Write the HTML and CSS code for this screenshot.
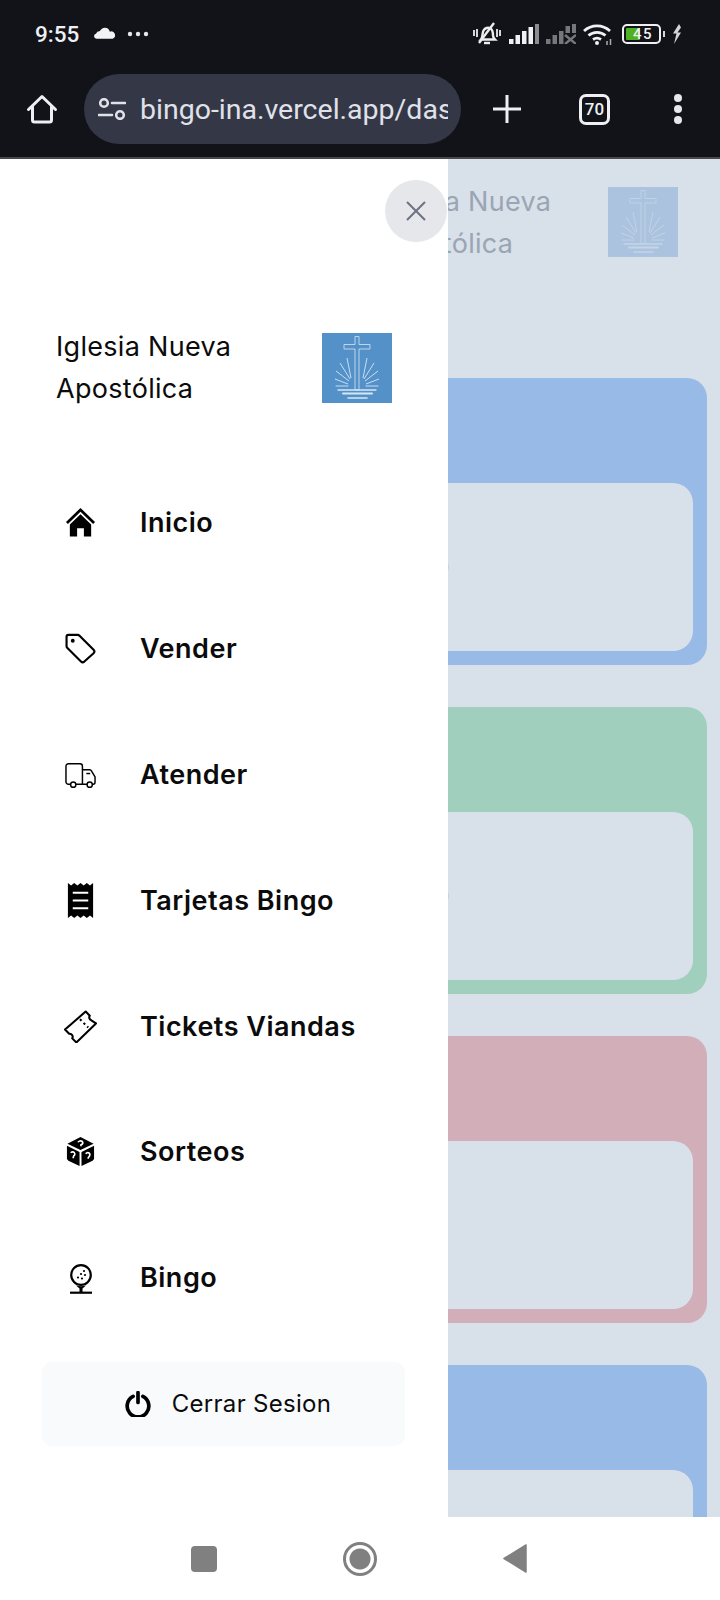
FILE: index.html
```html
<!DOCTYPE html>
<html lang="es">
<head>
<meta charset="utf-8">
<title>Bingo INA</title>
<link rel="stylesheet" href="styles.css">
</head>
<body>
<svg class="defs" width="0" height="0" aria-hidden="true">
  <symbol id="logo" viewBox="0 0 70 70">
    <g fill="none" stroke="currentColor">
      <path d="M33 3.500h4v8h11v4.500H37v41h-4V16H22v-4.500h11z" stroke-width=".8"/>
      <path d="M29 45L25 25M28 46L18 30M27 48L14 38M26 51L13 46M41 45L45 25M42 46L52 30M43 48L56 38M44 51L57 46" stroke-width=".9"/>
    </g>
    <g fill="none" stroke="currentColor" stroke-linecap="round">
      <path d="M14 53H26M44 53H56" stroke-width=".9"/>
      <path d="M16 57H54" stroke-width="1.300"/>
      <path d="M21 60.500H50" stroke-width="2"/>
      <path d="M26 65H45" stroke-width="1.600"/>
    </g>
  </symbol>
</svg>

<header class="chrome">
  <div class="status">
    <div class="status-left">
      <span class="time">9:55</span>
      <svg class="ic-cloud" viewBox="0 0 22 12"><path d="M2.500 12A2.600 2.600 0 0 1 2 6.900 4.500 4.500 0 0 1 6.200 4 6 6 0 0 1 11.500 0.500 5.600 5.600 0 0 1 16.600 4.600 3.800 3.800 0 0 1 19.500 12z" fill="#f1f2f4"/></svg>
      <svg class="ic-more" viewBox="0 0 22 6"><g fill="#e6e7ea"><circle cx="3" cy="3" r="2.200"/><circle cx="11" cy="3" r="2.200"/><circle cx="19" cy="3" r="2.200"/></g></svg>
    </div>
    <div class="status-right">
      <svg class="ic-bell" viewBox="0 0 28 24"><g fill="none" stroke="#eceded" stroke-width="2.400"><path d="M8 17.500c2-2 1-6 2.500-9C12 6 15 5 17.500 6.500 20 8 20 11 20 13.500c0 2 1 3 2 4z"/><path d="M11 21h6"/><path d="M6 21L21 1"/><path d="M1 8v6M4 7v8M27 8v6M24 7v8" stroke-width="1.800"/></g></svg>
      <svg class="ic-signal" viewBox="0 0 30 20"><g fill="#f0f1f2"><rect x="0" y="15" width="4.500" height="5"/><rect x="6.500" y="11" width="4.500" height="9"/><rect x="13" y="7" width="4.500" height="13"/><rect x="19.500" y="3" width="4.500" height="17"/></g><rect x="26" y="0" width="4" height="20" fill="#8b8d90"/></svg>
      <svg class="ic-signal" viewBox="0 0 30 20"><g fill="#75777b"><rect x="0" y="15" width="4.500" height="5"/><rect x="6.500" y="11" width="4.500" height="9"/><rect x="13" y="7" width="4.500" height="13"/><rect x="19.500" y="2" width="4.500" height="7"/><rect x="26" y="0" width="4" height="9"/><path d="M19 11l11 9M30 11l-11 9" stroke="#75777b" stroke-width="2.500"/></g></svg>
      <svg class="ic-wifi" viewBox="0 0 30 22"><g fill="none" stroke="#f0f1f2" stroke-width="2.800"><path d="M1 8a19 19 0 0 1 26 0"/><path d="M5.500 12.500a13 13 0 0 1 17 0"/><path d="M10 16.500a7 7 0 0 1 8 0"/></g><circle cx="14" cy="20" r="2" fill="#f0f1f2"/><path d="M24 22v-4M27.500 22v-6" stroke="#a9abae" stroke-width="1.500"/></svg>
      <div class="battery">
        <div class="battery-body"><span class="battery-fill"></span><span class="battery-num">45</span></div>
        <span class="battery-tip"></span>
      </div>
      <svg class="ic-bolt" viewBox="0 0 10 20"><path d="M7 0L1 9.500h3.500L2 20l7-11.500H5.500L9 3.500z" fill="#d4d5d7"/></svg>
    </div>
  </div>
  <div class="toolbar">
    <svg class="ic-home" viewBox="0 0 32 32"><path d="M2.500 16.500L16 3.500l13.500 13M6.500 13.500V27a2 2 0 0 0 2 2h15a2 2 0 0 0 2-2V13.500" fill="none" stroke="#eeeff2" stroke-width="3" stroke-linecap="round" stroke-linejoin="round"/></svg>
    <div class="urlbar">
      <svg class="ic-tune" viewBox="0 0 28 22"><g fill="none" stroke="#e0e2ea" stroke-width="2.600"><circle cx="6" cy="5" r="3.800"/><circle cx="22" cy="17" r="3.800"/><path d="M14 5h13M1 17h13" stroke-linecap="round"/></g></svg>
      <span class="url">bingo-ina.vercel.app/das</span>
    </div>
    <svg class="ic-plus" viewBox="0 0 28 28"><path d="M14 0v28M0 14h28" stroke="#eeeff2" stroke-width="3" stroke-linecap="round"/></svg>
    <div class="tabs">70</div>
    <svg class="ic-dots" viewBox="0 0 8 30"><g fill="#e6e7ea"><circle cx="4" cy="4" r="4"/><circle cx="4" cy="15" r="4"/><circle cx="4" cy="26" r="4"/></g></svg>
  </div>
</header>

<main class="viewport">
  <div class="dashboard">
    <div class="dash-head">
      <p class="dash-title">Iglesia Nueva Apostólica</p>
      <svg class="dash-logo"><use href="#logo"/></svg>
    </div>
    <section class="card card-blue"><div class="card-inner"><span class="card-value">0</span></div></section>
    <section class="card card-green"><div class="card-inner"><span class="card-value">0</span></div></section>
    <section class="card card-red"><div class="card-inner"></div></section>
    <section class="card card-blue"><div class="card-inner"></div></section>
  </div>

  <aside class="drawer">
    <button class="close" type="button" aria-label="Cerrar">
      <svg viewBox="0 0 20 20"><path d="M1 1l18 18M19 1L1 19" stroke="#6b7280" stroke-width="2"/></svg>
    </button>
    <div class="drawer-head">
      <p class="drawer-title">Iglesia Nueva Apostólica</p>
      <svg class="drawer-logo"><use href="#logo"/></svg>
    </div>
    <nav class="menu">
      <a class="item"><svg class="mi" viewBox="0 0 32 32"><path d="M16 1L1 15.500l2 2L16 5l13 12.500 2-2z" fill="#000"/><path d="M5 18L16 7.500 27 18v12.500h-7.500V22h-7v8.500H5z" fill="#000"/></svg><span>Inicio</span></a>
      <a class="item"><svg class="mi" viewBox="0 0 32 32"><path d="M3.500 2H13a3 3 0 0 1 2 .9l14.500 14.500a2.500 2.500 0 0 1 0 3.500L20 29.500a2.500 2.500 0 0 1-3.500 0L2.500 15.500a3 3 0 0 1-.9-2V4A2 2 0 0 1 3.500 2z" fill="none" stroke="#000" stroke-width="2.200" stroke-linejoin="round"/><circle cx="8" cy="8" r="2" fill="#000"/></svg><span>Vender</span></a>
      <a class="item"><svg class="mi" viewBox="0 0 32 32"><g fill="none" stroke="#000" stroke-width="1.500" stroke-linejoin="round"><path d="M6 26H3.500A2.500 2.500 0 0 1 1 23.500V7.500A2.500 2.500 0 0 1 3.500 5h12A2.500 2.500 0 0 1 18 7.500V26H11"/><path d="M18 11h7.500a2 2 0 0 1 1.800 1.200L31 18.500V24a2 2 0 0 1-2 2h-1M23 26h-5"/><circle cx="8.500" cy="26.500" r="2.700"/><circle cx="25.500" cy="26.500" r="2.700"/><path d="M22 15h4"/></g></svg><span>Atender</span></a>
      <a class="item"><svg class="mi mi-tall" viewBox="0 0 32 36"><path d="M3 0l3.300 2.500L9.500 0l3.300 2.500L16 0l3.300 2.500L22.500 0l3.300 2.500L29 0v36l-3.200-2.500L22.500 36l-3.200-2.500L16 36l-3.200-2.500L9.500 36l-3.200-2.500L3 36z" fill="#000"/><path d="M8 10h16M8 18h16M8 26h16" stroke="#fff" stroke-width="2"/></svg><span>Tarjetas Bingo</span></a>
      <a class="item"><svg class="mi mi-wide" viewBox="0 0 32 32"><g fill="none" stroke="#000" stroke-width="2" stroke-linejoin="round"><path d="M21 1.500L25 5.500a3 3 0 0 0 1.500 4.500L31 13 12 31.500 8 27.500A3 3 0 0 0 5 23L1 19z"/><path d="M15.500 9l1.500 1.500M19 12.500l1.500 1.500M22.500 16l1 1"/></g></svg><span>Tickets Viandas</span></a>
      <a class="item"><svg class="mi" viewBox="0 0 32 32"><path d="M16 1L29.500 8 16 14.500 2.500 8z" fill="#000"/><path d="M2 10l13 6.500V31L3.500 25.500Q2 24.500 2 23z" fill="#000"/><path d="M30 10l-13 6.500V31l11.500-5.500Q30 24.500 30 23z" fill="#000"/><g fill="none" stroke="#fff" stroke-width="1.700"><path d="M13.500 6.500a2.500 2 0 1 1 3 2.500v1.500"/><path d="M6 17.500a2.200 2.200 0 1 1 3 3l-.5 1.500v1"/><path d="M21.500 18.500a2.200 2.200 0 1 1 3.500 2.500l-1 1.500v1"/></g></svg><span>Sorteos</span></a>
      <a class="item"><svg class="mi mi-golf" viewBox="0 0 24 30"><circle cx="12" cy="11" r="9.800" fill="none" stroke="#000" stroke-width="2.200"/><path d="M7 21.500Q12 23 17 21.500L13.500 24.500v3.500h-3v-3.500z" fill="#000"/><path d="M1 28.700h22" stroke="#000" stroke-width="2.200"/><g fill="#000"><circle cx="15" cy="7" r="1.100"/><circle cx="12" cy="10" r="1.100"/><circle cx="16" cy="11" r="1.100"/><circle cx="9" cy="13.500" r="1.100"/><circle cx="13" cy="14.500" r="1.100"/></g></svg><span>Bingo</span></a>
    </nav>
    <button class="logout" type="button">
      <svg viewBox="0 0 24 24"><path d="M7.500 5a10 10 0 1 0 9 0" fill="none" stroke="#000" stroke-width="3.400" stroke-linecap="round"/><path d="M12 1.500v9" stroke="#000" stroke-width="3.400" stroke-linecap="round"/></svg>
      <span>Cerrar Sesion</span>
    </button>
  </aside>
</main>

<footer class="navbar">
  <span class="nav-square"></span>
  <span class="nav-circle"></span>
  <svg class="nav-back" viewBox="0 0 24 29"><path d="M23 1v27L1 14.500z" fill="#808080" stroke="#808080" stroke-width="1.500" stroke-linejoin="round"/></svg>
</footer>
</body>
</html>
```
FILE: styles.css
```css
* { box-sizing: border-box; }
html, body { margin: 0; height: 1600px; }
body {
  display: flex;
  flex-direction: column;
  width: 720px;
  overflow: hidden;
  background: #fff;
  font-family: Inter, "Liberation Sans", sans-serif;
}
p { margin: 0; }
svg { display: block; flex: none; }
.defs { position: absolute; }

/* Browser chrome */
.chrome {
  height: 159px;
  flex: none;
  background: #111318;
  border-bottom: 2px solid #47484c;
  font-family: Roboto, "Liberation Sans", sans-serif;
}
.status {
  height: 68px;
  padding: 0 38px 0 35px;
  display: flex;
  justify-content: space-between;
  align-items: center;
}
.status-left, .status-right { display: flex; align-items: center; }
.time { font-size: 22.5px; font-weight: 500; color: #eef0f2; width: 58px; }
.ic-cloud { width: 21px; height: 12px; margin-left: 1px; margin-top: -3px; }
.ic-more { width: 22px; height: 6px; margin-left: 12px; margin-top: -1px; }
.ic-bell { width: 28px; height: 24px; }
.ic-signal { width: 30px; height: 20px; margin-left: 8px; margin-right: -1px; }
.ic-wifi { width: 30px; height: 22px; margin-left: 8px; }
.battery { display: flex; align-items: center; margin-left: 9px; gap: 2px; }
.battery-body {
  position: relative;
  width: 39px;
  height: 20px;
  border: 2px solid #eef0f2;
  border-radius: 5px;
  padding: 2px;
  display: flex;
}
.battery-fill { width: 45%; background: #4fb021; border-radius: 1px; }
.battery-num {
  position: absolute;
  left: 9px;
  top: -1px;
  font-size: 15px;
  line-height: 18px;
  font-weight: 500;
  color: #f1f2f4;
  letter-spacing: 1.5px;
}
.battery-tip { width: 2px; height: 6px; background: #d4d5d7; }
.ic-bolt { width: 10px; height: 20px; margin-left: 7px; }

.toolbar {
  height: 89px;
  padding: 0 0 7px 26px;
  display: flex;
  align-items: center;
}
.ic-home { width: 32px; height: 32px; }
.urlbar {
  width: 377px;
  height: 70px;
  margin-left: 26px;
  padding: 0 13px 0 14px;
  display: flex;
  align-items: center;
  gap: 14px;
  background: #343746;
  border-radius: 35px;
  overflow: hidden;
}
.ic-tune { width: 28px; height: 22px; }
.url { font-size: 28.5px; color: #e0e2ea; white-space: nowrap; overflow: hidden; }
.ic-plus { width: 28px; height: 28px; margin-left: 32px; }
.tabs {
  width: 31px;
  height: 31px;
  margin-left: 58px;
  border: 3px solid #eeeff2;
  border-radius: 7px;
  color: #eeeff2;
  font-size: 17px;
  font-weight: 500;
  line-height: 25px;
  text-align: center;
}
.ic-dots { width: 8px; height: 30px; margin-left: 64px; }

/* Page behind the drawer */
.viewport {
  position: relative;
  flex: none;
  height: 1358px;
  overflow: hidden;
  background: #d8e0ea;
}
.dashboard { padding: 28px 13px 0 0; }
.dash-head {
  height: 191px;
  display: flex;
  align-items: flex-start;
  justify-content: flex-end;
  color: #9aa5b3;
}
.dash-title {
  width: 190px;
  margin-top: -6px;
  margin-right: 42px;
  font-size: 27px;
  line-height: 42px;
  letter-spacing: .3px;
}
.dash-logo { width: 70px; height: 70px; margin-right: 29px; background: #abc3de; color: #c5d5e7; }
.card {
  width: 707px;
  height: 287px;
  padding: 105px 14px 14px 0;
  margin-bottom: 42px;
  border-radius: 20px;
}
.card-blue { background: #98bae6; }
.card-green { background: #a0d0bd; }
.card-red { background: #d2aeb8; }
.card-inner {
  height: 100%;
  padding: 0 244px 0 0;
  display: flex;
  align-items: center;
  justify-content: flex-end;
  background: #d8e0ea;
  border-radius: 20px;
}
.card-value { font-size: 16px; color: #9aa5b3; }

/* Drawer */
.drawer {
  position: absolute;
  left: 0;
  top: 0;
  bottom: 0;
  width: 448px;
  padding: 174px 42px 0 43px;
  background: #fff;
  color: #0b0b0b;
  display: flex;
  flex-direction: column;
}
.close {
  position: absolute;
  left: 385px;
  top: 21px;
  width: 62px;
  height: 62px;
  padding: 0;
  border: 0;
  border-radius: 50%;
  background: #e5e7eb;
  display: flex;
  align-items: center;
  justify-content: center;
}
.close svg { width: 20px; height: 20px; }
.drawer-head {
  height: 127px;
  padding: 0 14px 0 13px;
  display: flex;
  justify-content: space-between;
  align-items: flex-start;
}
.drawer-title { width: 200px; font-size: 27px; line-height: 42px; letter-spacing: .3px; margin-top: -7px; }
.drawer-logo { width: 70px; height: 70px; background: #5491c9; color: #d6e6f5; }
.menu { display: flex; flex-direction: column; }
.item {
  height: 125.8px;
  display: flex;
  align-items: center;
  gap: 44px;
  padding-left: 22px;
  font-size: 27px;
  font-weight: 600;
  letter-spacing: .5px;
  color: #0b0b0b;
}
.mi { width: 31px; height: 31px; }
.mi-tall { height: 35px; }
.mi-wide { width: 33px; height: 33px; margin: 0 -1px; }
.mi-golf { width: 24px; height: 30px; margin: 2px 3.5px 0; }
.logout {
  width: 363px;
  height: 84px;
  margin: 21px 0 0 -1px;
  padding: 0 0 0 9px;
  border: 0;
  border-radius: 10px;
  background: #f9fafb;
  color: #0b0b0b;
  font: 400 24px Inter, "Liberation Sans", sans-serif;
  letter-spacing: .3px;
  display: flex;
  align-items: center;
  justify-content: center;
  gap: 21px;
}
.logout svg { width: 26px; height: 26px; }

/* System navigation */
.navbar {
  flex: 1;
  background: #fff;
  display: flex;
  align-items: center;
  justify-content: center;
}
.nav-square { width: 26px; height: 26px; margin-left: -2px; background: #808080; border-radius: 4px; }
.nav-circle {
  width: 34px;
  height: 34px;
  margin-left: 126px;
  border: 3px solid #808080;
  border-radius: 50%;
  background: radial-gradient(circle, #808080 0 10px, #fff 11px);
}
.nav-back { width: 24px; height: 29px; margin-left: 126px; }
```
